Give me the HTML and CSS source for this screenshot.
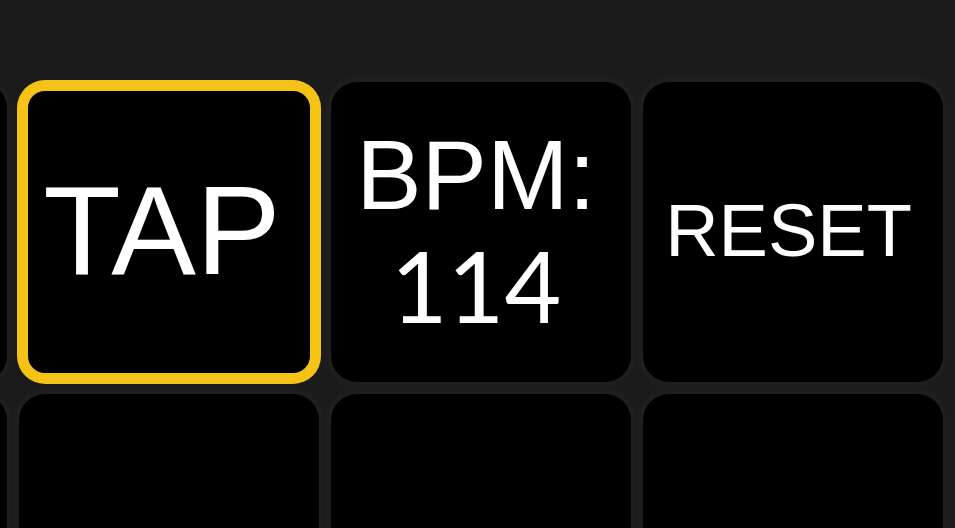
FILE: index.html
```html
<!DOCTYPE html>
<html lang="en">
<head>
    <meta charset="UTF-8">
    <meta name="viewport" content="width=device-width, initial-scale=1.0">
    <title>Tap Tempo</title>
    <link rel="stylesheet" href="styles.css">
</head>
<body>
    <div class="pad">
        <div class="cell"></div>
        <div class="cell tap"><span class="label big">TAP</span></div>
        <div class="cell"><span class="label mid">BPM:<br><span class="num">114</span></span></div>
        <div class="cell"><span class="label small">RESET</span></div>

        <div class="cell"></div>
        <div class="cell"></div>
        <div class="cell"></div>
        <div class="cell"></div>
    </div>
</body>
</html>
```

FILE: styles.css
```css
html, body {
    margin: 0;
    padding: 0;
    height: 100%;
    overflow: hidden;
}
body {
    background-color: #1b1b1b;
    font-family: 'Liberation Sans', Arial, sans-serif;
    color: #ffffff;
}
.pad {
    display: grid;
    grid-template-columns: repeat(4, 300px);
    grid-auto-rows: 300px;
    gap: 12px;
    padding-top: 82px;
    margin-left: -293px;
}
.cell {
    background-color: #000000;
    border-radius: 26px;
    box-shadow: 0 0 10px 3px rgba(255, 255, 255, 0.035);
    display: flex;
    align-items: center;
    justify-content: center;
    text-align: center;
    box-sizing: border-box;
}
.tap {
    border: 9px solid #f5c316;
    box-shadow: 0 0 0 2px #f5c316;
}
.label {
    font-weight: 400;
}
.big {
    font-size: 127px;
    line-height: 1;
    margin-right: 14px;
    margin-top: -4px;
}
.mid {
    font-size: 98px;
    line-height: 110px;
    margin-right: 10px;
}
.num {
    font-family: 'Lato', 'Liberation Sans', sans-serif;
}
.small {
    font-size: 74px;
    line-height: 1;
    margin-right: 9px;
    margin-top: -2px;
}
```
